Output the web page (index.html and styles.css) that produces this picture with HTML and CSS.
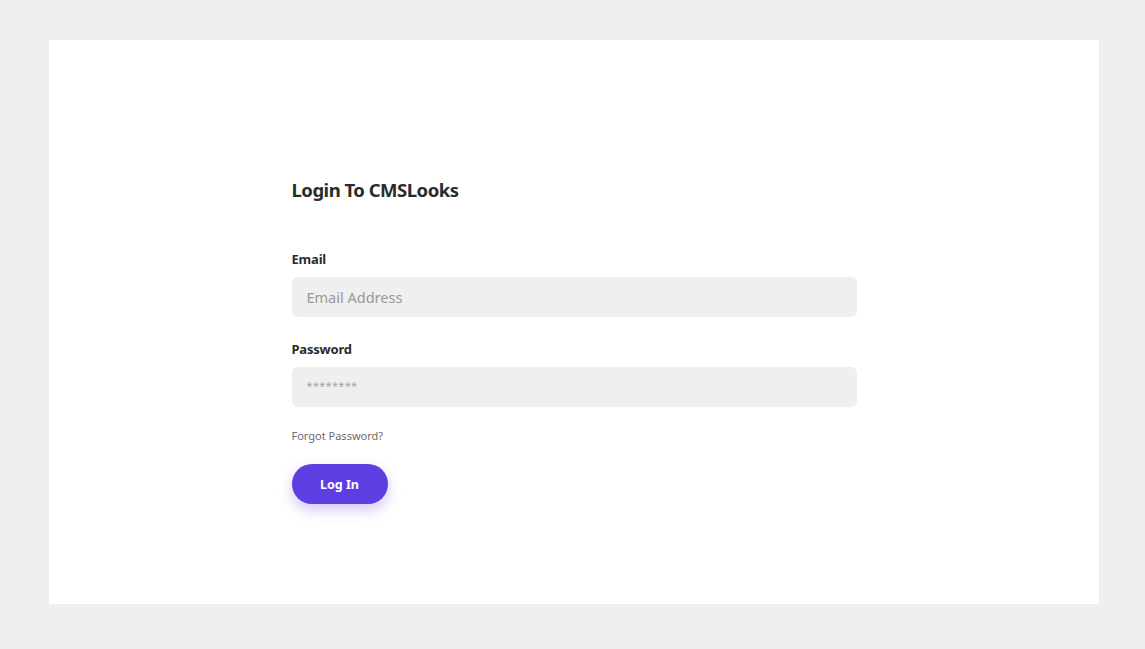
FILE: index.html
```html
<!DOCTYPE html>
<html lang="en">
<head>
<meta charset="utf-8">
<title>Login To CMSLooks</title>
<link rel="stylesheet" href="styles.css">
</head>
<body>
<main class="card">
  <form class="login">
    <h1 class="title">Login To CMSLooks</h1>
    <label class="label" for="email">Email</label>
    <input class="field" id="email" type="text" placeholder="Email Address">
    <label class="label label-pw" for="pw">Password</label>
    <input class="field field-pw" id="pw" type="text" placeholder="********">
    <a class="forgot" href="#">Forgot Password?</a>
    <button class="btn" type="button">Log In</button>
  </form>
</main>
</body>
</html>
```
FILE: styles.css
```css
* { box-sizing: border-box; }
html, body { margin: 0; height: 100%; }
body {
  background: #efefef;
  padding: 40px 46px 45px 49px;
  font-family: "Noto Sans", "Open Sans", sans-serif;
  color: #2b2b2b;
}
.card {
  background: #fff;
  height: 564px;
  display: flex;
  justify-content: center;
  padding-top: 137px;
}
.login {
  width: 565px;
  display: flex;
  flex-direction: column;
  align-items: flex-start;
}
.title {
  margin: 0;
  font-size: 18.5px;
  line-height: 26px;
  font-weight: 700;
  letter-spacing: -0.5px;
}
.label {
  margin-top: 46px;
  font-size: 13px;
  line-height: 20px;
  font-weight: 700;
  letter-spacing: -0.2px;
}
.label-pw { margin-top: 22px; }
.field {
  margin-top: 8px;
  width: 100%;
  height: 40px;
  border: 0;
  border-radius: 6px;
  background: #efefef;
  padding: 0 15px;
  font-family: inherit;
  font-size: 14.5px;
  color: #333;
  outline: none;
}
.field::placeholder { color: #999; }
.field-pw { padding-bottom: 6px; }
.field-pw::placeholder { font-size: 11px; letter-spacing: 0.3px; color: #a5a5a5; }
.forgot {
  margin-top: 21px;
  font-size: 11px;
  line-height: 16px;
  color: #6b6b6b;
  text-decoration: none;
}
.btn {
  margin-top: 20px;
  width: 96px;
  height: 40px;
  border: 0;
  border-radius: 20px;
  background: #5e3ee1;
  color: #fff;
  font-family: inherit;
  font-size: 12.5px;
  font-weight: 700;
  box-shadow: 0 6px 14px rgba(94, 62, 225, 0.28);
  cursor: pointer;
}
```
